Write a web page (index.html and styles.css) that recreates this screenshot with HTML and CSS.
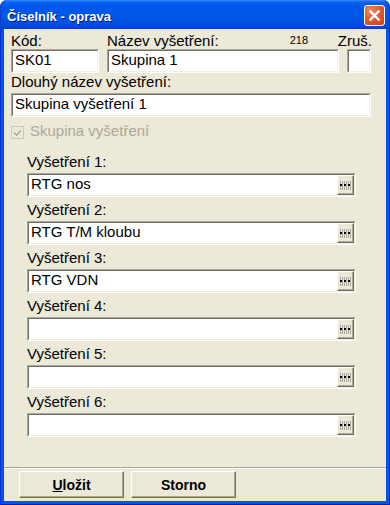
FILE: index.html
```html
<!DOCTYPE html>
<html lang="cs">
<head>
<meta charset="utf-8">
<title>Číselník - oprava</title>
<link rel="stylesheet" href="styles.css">
</head>
<body>
<div class="window">
  <div class="titlebar">
    <span class="title">Číselník - oprava</span>
    <div class="close">
      <svg width="19" height="19" viewBox="0 0 19 19"><path d="M5.5 5.5 L13.5 13.5 M13.5 5.5 L5.5 13.5" stroke="#fff" stroke-width="2.4" stroke-linecap="square" fill="none"/></svg>
    </div>
  </div>
  <div class="frame">
    <div class="client">
      <div class="row-top">
        <div class="cell">
          <div class="lbl">Kód:</div>
          <div class="input"><div class="input-in"><span class="val">SK01</span></div></div>
        </div>
        <div class="cell">
          <div class="lbl lbl-row"><span>Název vyšetření:</span><span class="count">218</span></div>
          <div class="input"><div class="input-in"><span class="val">Skupina 1</span></div></div>
        </div>
        <div class="cell">
          <div class="lbl lbl-right">Zruš.</div>
          <div class="input"><div class="input-in"></div></div>
        </div>
      </div>

      <div class="lbl lbl-long">Dlouhý název vyšetření:</div>
      <div class="input"><div class="input-in"><span class="val">Skupina vyšetření 1</span></div></div>

      <div class="check-row">
        <svg class="cbox" width="13" height="13" viewBox="0 0 13 13" shape-rendering="crispEdges"><rect x="0.5" y="0.5" width="12" height="12" fill="#ECE9D8" stroke="#CAC8BB"/><path d="M3 6 L3 8 L5 10 L10 5 L10 3 L5 8 Z" fill="#ACA899"/></svg>
        <span class="check-lbl">Skupina vyšetření</span>
      </div>

      <div class="picks">
        <div class="pick">
          <div class="lbl">Vyšetření 1:</div>
          <div class="input"><div class="input-in picker"><span class="val">RTG nos</span><div class="dots"><svg width="11" height="9" viewBox="0 0 11 9" shape-rendering="crispEdges"><g fill="#ACA899"><rect x="0" y="0" width="1" height="9"/><rect x="2" y="0" width="1" height="9"/><rect x="4" y="0" width="1" height="9"/><rect x="6" y="0" width="1" height="9"/><rect x="8" y="0" width="1" height="9"/><rect x="10" y="0" width="1" height="9"/></g><g fill="#000"><rect x="0" y="3" width="2" height="2"/><rect x="4" y="3" width="2" height="2"/><rect x="8" y="3" width="2" height="2"/></g></svg></div></div></div>
        </div>
        <div class="pick">
          <div class="lbl">Vyšetření 2:</div>
          <div class="input"><div class="input-in picker"><span class="val">RTG T/M kloubu</span><div class="dots"><svg width="11" height="9" viewBox="0 0 11 9" shape-rendering="crispEdges"><g fill="#ACA899"><rect x="0" y="0" width="1" height="9"/><rect x="2" y="0" width="1" height="9"/><rect x="4" y="0" width="1" height="9"/><rect x="6" y="0" width="1" height="9"/><rect x="8" y="0" width="1" height="9"/><rect x="10" y="0" width="1" height="9"/></g><g fill="#000"><rect x="0" y="3" width="2" height="2"/><rect x="4" y="3" width="2" height="2"/><rect x="8" y="3" width="2" height="2"/></g></svg></div></div></div>
        </div>
        <div class="pick">
          <div class="lbl">Vyšetření 3:</div>
          <div class="input"><div class="input-in picker"><span class="val">RTG VDN</span><div class="dots"><svg width="11" height="9" viewBox="0 0 11 9" shape-rendering="crispEdges"><g fill="#ACA899"><rect x="0" y="0" width="1" height="9"/><rect x="2" y="0" width="1" height="9"/><rect x="4" y="0" width="1" height="9"/><rect x="6" y="0" width="1" height="9"/><rect x="8" y="0" width="1" height="9"/><rect x="10" y="0" width="1" height="9"/></g><g fill="#000"><rect x="0" y="3" width="2" height="2"/><rect x="4" y="3" width="2" height="2"/><rect x="8" y="3" width="2" height="2"/></g></svg></div></div></div>
        </div>
        <div class="pick">
          <div class="lbl">Vyšetření 4:</div>
          <div class="input"><div class="input-in picker"><span class="val"></span><div class="dots"><svg width="11" height="9" viewBox="0 0 11 9" shape-rendering="crispEdges"><g fill="#ACA899"><rect x="0" y="0" width="1" height="9"/><rect x="2" y="0" width="1" height="9"/><rect x="4" y="0" width="1" height="9"/><rect x="6" y="0" width="1" height="9"/><rect x="8" y="0" width="1" height="9"/><rect x="10" y="0" width="1" height="9"/></g><g fill="#000"><rect x="0" y="3" width="2" height="2"/><rect x="4" y="3" width="2" height="2"/><rect x="8" y="3" width="2" height="2"/></g></svg></div></div></div>
        </div>
        <div class="pick">
          <div class="lbl">Vyšetření 5:</div>
          <div class="input"><div class="input-in picker"><span class="val"></span><div class="dots"><svg width="11" height="9" viewBox="0 0 11 9" shape-rendering="crispEdges"><g fill="#ACA899"><rect x="0" y="0" width="1" height="9"/><rect x="2" y="0" width="1" height="9"/><rect x="4" y="0" width="1" height="9"/><rect x="6" y="0" width="1" height="9"/><rect x="8" y="0" width="1" height="9"/><rect x="10" y="0" width="1" height="9"/></g><g fill="#000"><rect x="0" y="3" width="2" height="2"/><rect x="4" y="3" width="2" height="2"/><rect x="8" y="3" width="2" height="2"/></g></svg></div></div></div>
        </div>
        <div class="pick">
          <div class="lbl">Vyšetření 6:</div>
          <div class="input"><div class="input-in picker"><span class="val"></span><div class="dots"><svg width="11" height="9" viewBox="0 0 11 9" shape-rendering="crispEdges"><g fill="#ACA899"><rect x="0" y="0" width="1" height="9"/><rect x="2" y="0" width="1" height="9"/><rect x="4" y="0" width="1" height="9"/><rect x="6" y="0" width="1" height="9"/><rect x="8" y="0" width="1" height="9"/><rect x="10" y="0" width="1" height="9"/></g><g fill="#000"><rect x="0" y="3" width="2" height="2"/><rect x="4" y="3" width="2" height="2"/><rect x="8" y="3" width="2" height="2"/></g></svg></div></div></div>
        </div>
      </div>

      <div class="separator"></div>
      <div class="buttons">
        <div class="btn"><span class="ul">U</span>ložit</div>
        <div class="btn">Storno</div>
      </div>
    </div>
  </div>
</div>
</body>
</html>
```

FILE: styles.css
```css
html, body {
  margin: 0;
  padding: 0;
  background: #ffffff;
}

body {
  font-family: "Liberation Sans", Arial, sans-serif;
  color: #000;
}

.window {
  width: 390px;
  height: 505px;
  display: flex;
  flex-direction: column;
}

.titlebar {
  height: 29px;
  flex: none;
  box-sizing: border-box;
  display: flex;
  align-items: flex-start;
  padding: 0 5px 0 7px;
  border-radius: 7px 7px 0 0;
  background: linear-gradient(to bottom,
    #3C8FFB 0px, #0A62F0 2px, #0058EE 5px, #0056E8 14px,
    #0053E0 22px, #004AD4 26px, #0040C9 29px);
  box-shadow: inset 1px 0 0 #0A3FCB, inset -1px 0 0 #0A30B8;
}

.title {
  flex: 1;
  color: #fff;
  font-weight: bold;
  font-size: 13px;
  line-height: 15px;
  margin-top: 9px;
  text-shadow: 1px 1px 0 #0A1883;
}

.close {
  width: 21px;
  height: 21px;
  margin-top: 5px;
  box-sizing: border-box;
  border: 1px solid #fff;
  border-radius: 3px;
  background: radial-gradient(circle at 30% 25%, #EE8A68 0%, #E25A31 45%, #C94019 100%);
  display: flex;
}

.frame {
  flex: 1;
  display: flex;
  padding: 0 4px 4px;
  background: #0055E5;
  box-shadow: inset 1px 0 0 #0831D9, inset -1px 0 0 #001EA0, inset 0 -1px 0 #001EA0;
}

.client {
  flex: 1;
  display: flex;
  flex-direction: column;
  background: #ECE9D8;
  padding: 4px 15px 0 7px;
}

.lbl {
  font-size: 15px;
  line-height: 16px;
  height: 16px;
  white-space: nowrap;
}

.row-top {
  display: grid;
  grid-template-columns: 88px 232px 24px;
  column-gap: 8px;
}

.cell {
  display: flex;
  flex-direction: column;
}

.lbl-row {
  display: flex;
  align-items: flex-start;
  justify-content: space-between;
}

.count {
  font-size: 11px;
  line-height: 13px;
  margin-top: 1px;
  margin-right: 31px;
}

.lbl-right {
  display: flex;
  justify-content: flex-end;
  margin-right: -1px;
}

.lbl-long {
  margin-top: 1px;
  margin-bottom: 3px;
}

.input {
  height: 24px;
  box-sizing: border-box;
  border: 1px solid;
  border-color: #ACA899 #fff #fff #ACA899;
}

.input-in {
  height: 100%;
  box-sizing: border-box;
  border: 1px solid;
  border-color: #716F64 #F1EFE2 #F1EFE2 #716F64;
  background: #fff;
  display: flex;
  align-items: flex-start;
  padding-left: 2px;
  font-size: 15px;
  line-height: 18px;
}

.val {
  flex: 1;
  white-space: nowrap;
  overflow: hidden;
}

.check-row {
  display: flex;
  align-items: flex-start;
  margin-top: 6px;
}

.cbox {
  flex: none;
  margin-top: 3px;
  margin-right: 6px;
}

.check-lbl {
  font-size: 15px;
  line-height: 16px;
  color: #ACA899;
}

.picks {
  margin-top: 15px;
  padding: 0 15px 0 16px;
  display: flex;
  flex-direction: column;
  gap: 5px;
}

.pick .lbl {
  margin-bottom: 3px;
}

.picker {
  align-items: stretch;
}

.dots {
  flex: none;
  width: 17px;
  box-sizing: border-box;
  border: 1px solid;
  border-color: #fff #716F64 #716F64 #fff;
  box-shadow: inset -1px -1px 0 #ACA899;
  background: #ECE9D8;
  display: flex;
  align-items: center;
  justify-content: center;
}

.separator {
  margin: 30px -15px 0 -7px;
  height: 1px;
  border-top: 1px solid #ACA899;
  background: #fff;
}

.buttons {
  display: flex;
  gap: 7px;
  margin-top: 2px;
  padding-left: 8px;
}

.btn {
  width: 105px;
  height: 27px;
  box-sizing: border-box;
  border: 1px solid;
  border-color: #fff #716F64 #716F64 #fff;
  box-shadow: inset -1px -1px 0 #ACA899;
  background: #ECE9D8;
  display: flex;
  align-items: center;
  justify-content: center;
  font-size: 14px;
  font-weight: bold;
}

.ul {
  text-decoration: underline;
}
```
